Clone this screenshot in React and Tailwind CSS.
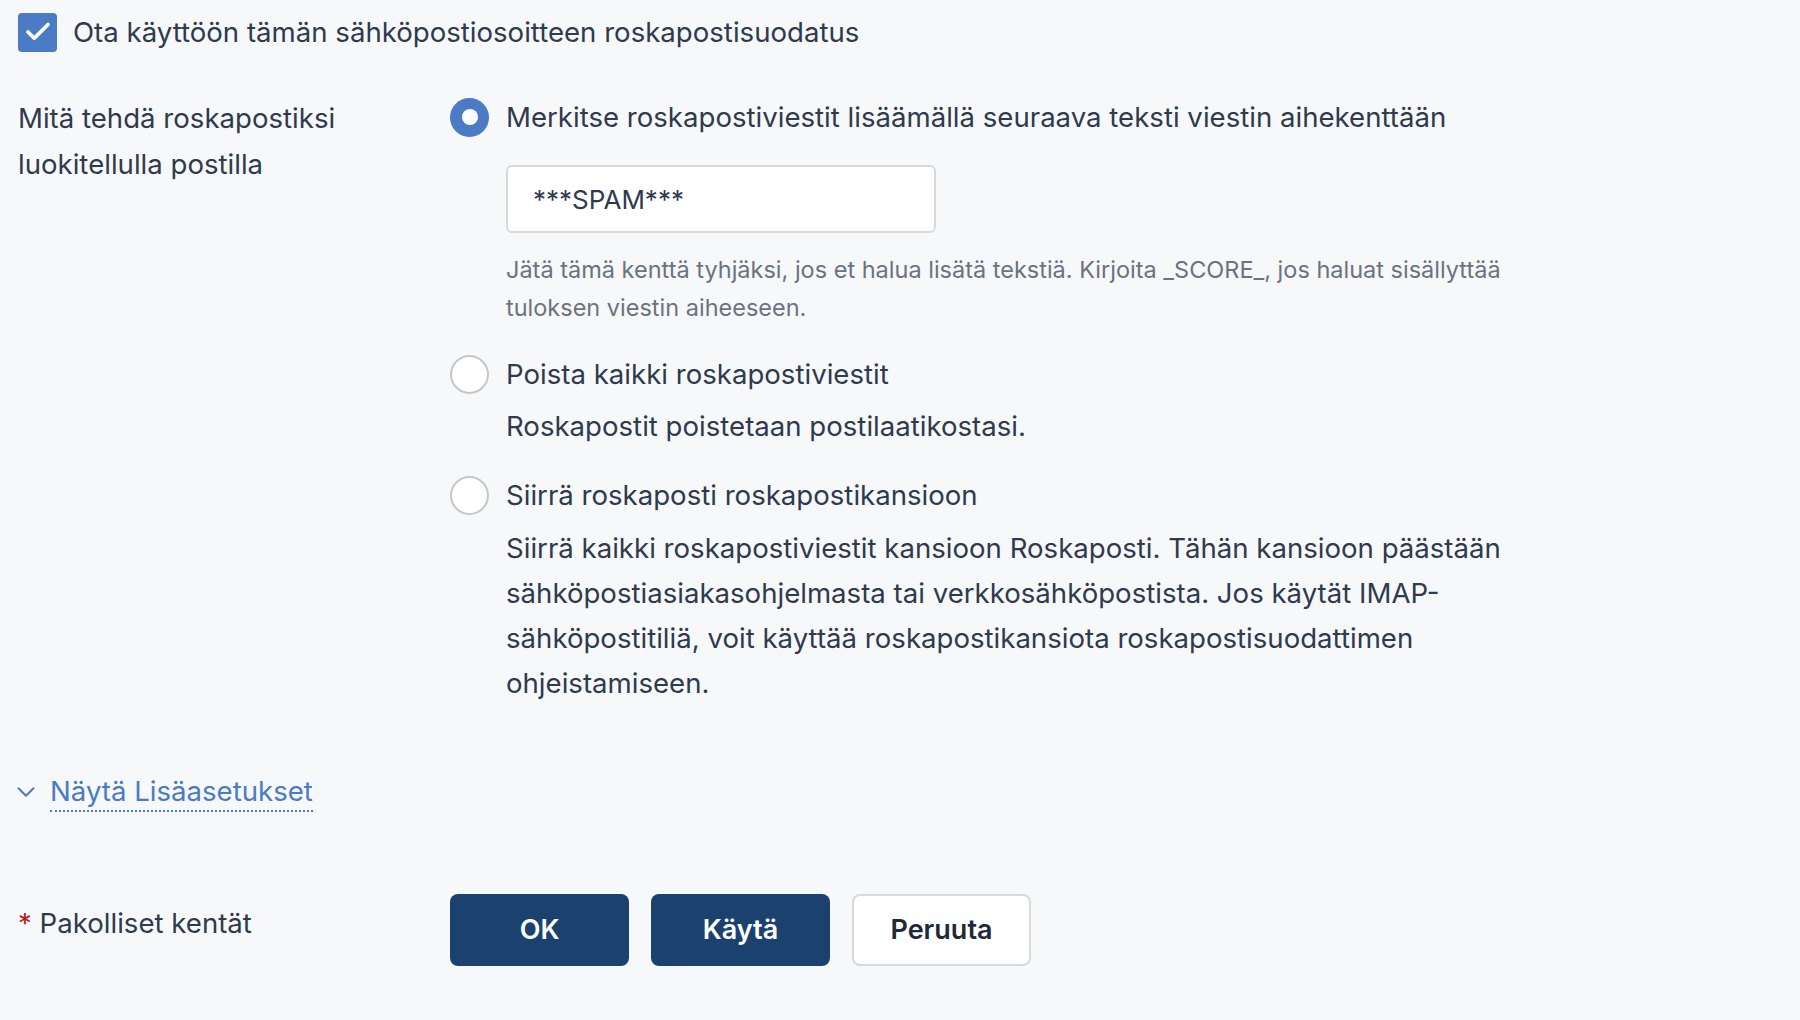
import { Check, ChevronDown } from "lucide-react";

const Radio = ({ checked }) => (
  <span
    className={
      checked
        ? "flex h-[39px] w-[39px] shrink-0 items-center justify-center rounded-full bg-[#4a7bc4]"
        : "h-[39px] w-[39px] shrink-0 rounded-full border-2 border-[#c4c7cc] bg-white"
    }
  >
    {checked && <span className="h-[16px] w-[16px] rounded-full bg-white" />}
  </span>
);

export default function App() {
  return (
    <div className="min-h-screen bg-[#f7f8fa] pl-[18px] pt-[11px] font-['Inter',sans-serif] text-[#2f3a4e]">
      <label className="flex items-center gap-[16px]">
        <span className="flex h-[39px] w-[39px] items-center justify-center rounded-[4px] bg-[#4a7bc4]">
          <Check className="h-[30px] w-[30px] text-white" strokeWidth={3} />
        </span>
        <span className="text-[27.6px] leading-[42px]">Ota käyttöön tämän sähköpostiosoitteen roskapostisuodatus</span>
      </label>

      <div className="mt-[43px] grid grid-cols-[432px_1fr]">
        <div className="-mt-[1px] text-[27.6px] leading-[46px]">
          Mitä tehdä roskapostiksi
          <br />
          luokitellulla postilla
        </div>

        <div className="max-w-[1090px]">
          <div className="flex items-center gap-[17px]">
            <Radio checked />
            <span className="text-[27.6px] leading-[42px]">Merkitse roskapostiviestit lisäämällä seuraava teksti viestin aihekenttään</span>
          </div>
          <div className="pl-[56px]">
            <div className="mt-[27px] flex h-[68px] w-[430px] items-center rounded-[6px] border-2 border-[#d6d9de] bg-white px-[25px] text-[26px]">
              ***SPAM***
            </div>
            <p className="mt-[18px] text-[23.5px] leading-[38px] text-[#6b7280]">
              Jätä tämä kenttä tyhjäksi, jos et halua lisätä tekstiä. Kirjoita _SCORE_, jos haluat sisällyttää tuloksen viestin aiheeseen.
            </p>
          </div>

          <div className="mt-[26px] flex items-center gap-[17px]">
            <Radio />
            <span className="text-[27.6px] leading-[42px]">Poista kaikki roskapostiviestit</span>
          </div>
          <p className="mt-[9px] pl-[56px] text-[27.6px] leading-[45px]">Roskapostit poistetaan postilaatikostasi.</p>

          <div className="mt-[25px] flex items-center gap-[17px]">
            <Radio />
            <span className="text-[27.6px] leading-[42px]">Siirrä roskaposti roskapostikansioon</span>
          </div>
          <p className="mt-[10px] pl-[56px] text-[27.6px] leading-[45px]">
            Siirrä kaikki roskapostiviestit kansioon Roskaposti. Tähän kansioon päästään sähköpostiasiakasohjelmasta tai verkkosähköpostista. Jos käytät IMAP-sähköpostitiliä, voit käyttää roskapostikansiota roskapostisuodattimen ohjeistamiseen.
          </p>
        </div>
      </div>

      <div className="mt-[66px] flex items-center text-[#4a7bc4]">
        <ChevronDown className="-ml-[7px] h-[30px] w-[30px]" strokeWidth={1.6} />
        <span className="ml-[9px] border-b-2 border-dotted border-[#4a7bc4] text-[27.6px] leading-[38px]">Näytä Lisäasetukset</span>
      </div>

      <div className="mt-[82px] grid grid-cols-[432px_1fr] items-center">
        <div className="pb-[12px] text-[27.6px]">
          <span className="text-[#b91c1c]">*</span> Pakolliset kentät
        </div>
        <div className="flex gap-[22px]">
          <button className="h-[72px] w-[179px] rounded-[8px] bg-[#1b416f] text-[27px] font-semibold text-white">OK</button>
          <button className="h-[72px] w-[179px] rounded-[8px] bg-[#1b416f] text-[27px] font-semibold text-white">Käytä</button>
          <button className="h-[72px] w-[179px] rounded-[8px] border-2 border-[#d6d9de] bg-white text-[27px] font-semibold text-[#1f2937]">Peruuta</button>
        </div>
      </div>
    </div>
  );
}
